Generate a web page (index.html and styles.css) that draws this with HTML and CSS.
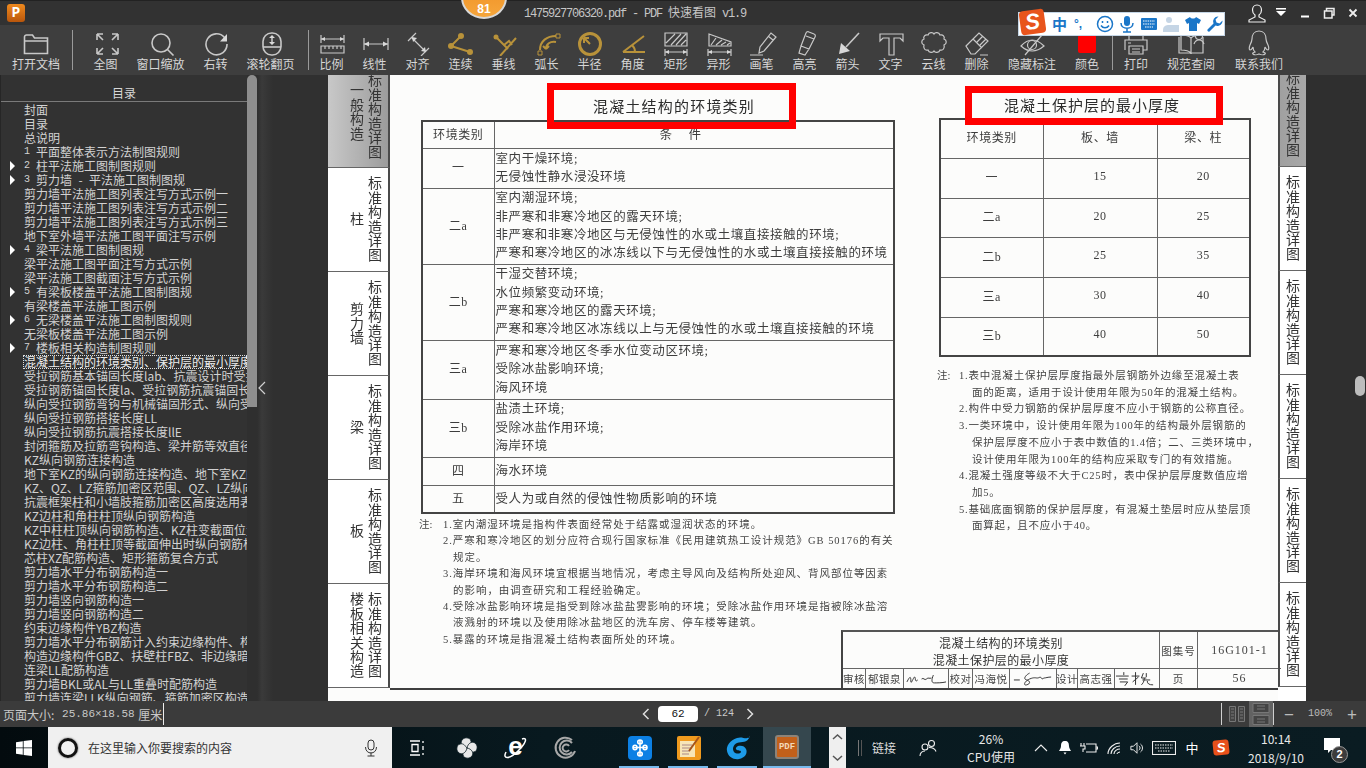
FILE: index.html
```html
<!DOCTYPE html>
<html lang="zh-CN">
<head>
<meta charset="utf-8">
<title>PDF 快速看图</title>
<link rel="stylesheet" href="styles.css">
</head>
<body>
<div class="app">
  <header class="titlebar">
    <div class="logo">P</div>
    <div class="title">1475927706320.pdf - PDF <span class="cjk">快速看图</span> v1.9</div>
    <div class="winbtns">
      <svg class="wb wb-user" viewBox="0 0 24 20"><path d="M12 2c3 0 4.500 2.500 4.500 5 0 2-1 4-2.500 5v2l6 3v2H4v-2l6-3v-2c-1.500-1-2.500-3-2.500-5 0-2.500 1.500-5 4.500-5z"/></svg>
      <svg class="wb" viewBox="0 0 24 20"><path class="solid" d="M7 5h10v1.500H7zM7 8h10l-5 5z"/></svg>
      <svg class="wb" viewBox="0 0 24 20"><path class="solid" d="M8 12.500h8v2H8z"/></svg>
      <svg class="wb wb-r" viewBox="0 0 24 20"><path d="M9.500 8V5.500h7.500V12h-2.500M7.500 8H15v7H7.500z"/></svg>
      <svg class="wb wb-x" viewBox="0 0 24 20"><path d="M8.500 6.500l7 7M15.500 6.500l-7 7"/></svg>
    </div>
  </header>

  <nav class="toolbar">
    <div class="tool w72"><svg class="ic" viewBox="0 0 30 27"><path d="M3.500 24.500V8a2 2 0 0 1 2-2h6l2 3h13v15.500zM3.500 12h23"/></svg><span>打开文档</span></div>
    <i class="sep sep-a"></i>
    <div class="tool w55"><svg class="ic" viewBox="0 0 30 27"><path d="M6 5l6 6M6 5h6M6 5v6M27 5l-6 6M27 5h-6M27 5v6M6 25l6-6M6 25h6M6 25v-6M27 25l-6-6M27 25h-6M27 25v-6"/></svg><span>全图</span></div>
    <div class="tool w55"><svg class="ic" viewBox="0 0 30 27"><circle cx="15" cy="14" r="9"/><path d="M21.500 20.500l6 6"/></svg><span>窗口缩放</span></div>
    <div class="tool w55"><svg class="ic" viewBox="0 0 30 27"><path d="M23.500 8.500A10.500 10.500 0 1 0 26 15"/><path class="fill" d="M26 5v7.500h-7z"/></svg><span>右转</span></div>
    <div class="tool w55"><svg class="ic" viewBox="0 0 30 27"><rect x="7" y="4" width="18" height="22" rx="8.500"/><path d="M7 18h18"/><path class="fill" d="M16 6l3 3h-6zM16 16l3-3h-6zM15.300 9h1.400v4h-1.400z"/></svg><span>滚轮翻页</span></div>
    <i class="sep sep-b"></i>
    <div class="tool w43"><svg class="ic thin" viewBox="0 0 30 27"><path d="M4 6v8M27 6v8M4 10h23M4 17h23v7H4zM8 17v3M12 17v3M16 17v3M20 17v3M24 17v3"/><path class="fill" d="M4 10l4-2v4zM27 10l-4-2v4z"/></svg><span>比例</span></div>
    <div class="tool w43"><svg class="ic thin" viewBox="0 0 30 27"><path d="M4 9v12M28 9v12M4 15h24"/><path class="fill" d="M4 15l5-2.500v5zM28 15l-5-2.500v5z"/></svg><span>线性</span></div>
    <div class="tool w43"><svg class="ic thin" viewBox="0 0 30 27"><path d="M5 12l8-8M18 27l8-8M9 9l14 14"/><path class="fill" d="M9 8l5 1-4 4zM23 23l-5-1 4-4z"/></svg><span>对齐</span></div>
    <div class="tool w43"><svg class="ic gold" viewBox="0 0 30 27"><path d="M15 7L5 17l19 6"/><circle class="gfill" cx="15" cy="7" r="3"/><circle class="gfill" cx="5" cy="17" r="3"/><circle class="gfill" cx="24" cy="23" r="3"/></svg><span>连续</span></div>
    <div class="tool w43"><svg class="ic gold" viewBox="0 0 30 27"><path d="M27 9L11 27M7 8l12 12M15 16l5-4 3 4"/><circle class="gfill" cx="7" cy="8" r="2.500"/></svg><span>垂线</span></div>
    <div class="tool w43"><svg class="ic gold" viewBox="0 0 30 27"><path d="M8 21C8 12 15 7 24 7M14 20c0-5 4-8 10-7M14 20l-3-3M14 20l3-3"/><path class="gthin" d="M6 22h4v4H6zM24 5h4v4h-4z"/></svg><span>弧长</span></div>
    <div class="tool w43"><svg class="ic gold" viewBox="0 0 30 27"><circle class="gthick" cx="15" cy="15" r="10.500"/><path d="M15 15L9 9M9 9h5M9 9v5"/></svg><span>半径</span></div>
    <div class="tool w43"><svg class="ic gold" viewBox="0 0 30 27"><path d="M5 23h22M5 23L26 7M14 16c2 2 3 4 3 7"/></svg><span>角度</span></div>
    <div class="tool w43"><svg class="ic thin" viewBox="0 0 30 27"><path d="M4 4h22v13H4zM5 14l9-9M10 16l10-11M15 16l10-11M20 16l5-5M4 20v7M26 20v7M4 23h22"/><path class="fill" d="M4 23l4-2v4zM26 23l-4-2v4z"/></svg><span>矩形</span></div>
    <div class="tool w43"><svg class="ic thin" viewBox="0 0 30 27"><path d="M5 5l22 8v4H5zM7 16l5-7M12 16l6-5M17 16l5-3M23 16l3-2M4 20v7M27 20v7M4 23h23"/><path class="fill" d="M4 23l4-2v4zM27 23l-4-2v4z"/></svg><span>异形</span></div>
    <div class="tool w43"><svg class="ic thin" viewBox="0 0 30 27"><path d="M3 26h13M12 24l1-6L24 4l5 4-12 14zM21 7l5 4"/></svg><span>画笔</span></div>
    <div class="tool w43"><svg class="ic thin" viewBox="0 0 30 27"><path d="M11 17l5-13a2 2 0 0 1 3-1l5 2a2 2 0 0 1 1 3l-6 12zM16 7l8 3M11 17l-2 7 6 2 4-6"/></svg><span>高亮</span></div>
    <div class="tool w43"><svg class="ic" viewBox="0 0 30 27"><path d="M26 4L13 18"/><path class="fill" d="M6 25l2-11 9 8z"/></svg><span>箭头</span></div>
    <div class="tool w43"><svg class="ic thin" viewBox="0 0 30 27"><path d="M4 5h23v7l-3-3h-6v17h-5V9H7l-3 3z"/></svg><span>文字</span></div>
    <div class="tool w43"><svg class="ic thin" viewBox="0 0 30 27"><path d="M9 6c1-3 5-3 6-1 1-2 5-2 6 1 3-1 5 2 4 4 3 1 3 5 0 6 1 3-1 6-4 5-1 3-5 3-6 1-1 2-5 2-6-1-3 1-5-2-4-5-3-1-3-5 0-6-1-2 1-5 4-4z"/></svg><span>云线</span></div>
    <div class="tool w43"><svg class="ic thin" viewBox="0 0 30 27"><path d="M4 17L17 4l9 8-13 13H9zM11 10l9 9M21 7l-6 6M24 10l-6 6M18 26h8"/></svg><span>删除</span></div>
    <div class="tool w69"><svg class="ic thin" viewBox="0 0 30 27"><path d="M4 17Q15 5 27 17 15 27 4 17z"/><circle cx="15" cy="16" r="4.500"/><path d="M8 26L25 6"/></svg><span>隐藏标注</span></div>
    <div class="tool w42"><div class="swatch"></div><span>颜色</span></div>
    <i class="sep sep-c"></i>
    <div class="tool w44"><svg class="ic thin" viewBox="0 0 30 27"><path d="M8 11V5h14v6M4 21V11h22v10h-4M8 17h14v8H8zM11 20h8M11 23h8M7 14h3"/></svg><span>打印</span></div>
    <div class="tool w64"><svg class="ic thin" viewBox="0 0 30 27"><path d="M3 8v16h11c1 0 1 1 1 1s0-1 1-1h11V8M15 9v16M15 9c-2-2-6-3-10-3v15c4 0 8 1 10 3M15 9c1-1 2-2 4-2"/><circle cx="23" cy="7" r="3.500"/><path d="M18 15c1-3 3-4 5-4s4 1 5 4"/></svg><span>规范查阅</span></div>
    <div class="tool w72 qq"><svg class="ic thin" viewBox="0 0 30 27"><path d="M15 2c5 0 7 4 7 8 0 2 1 4 2 6s1 5 0 5-2-1-3-3c0 2-1 4-2 5 2 1 3 1 2 2s-4 1-6 0c-2 1-5 1-6 0s0-1 2-2c-1-1-2-3-2-5-1 2-2 3-3 3s-1-3 0-5 2-4 2-6c0-4 2-8 7-8z"/></svg><span>联系我们</span></div>
  </nav>

  <main class="main">
    <aside class="sidebar">
      <h2 class="toc-head">目录</h2>
      <ul class="toc">
        <li>封面</li>
        <li>目录</li>
        <li>总说明</li>
        <li><b>1</b>平面整体表示方法制图规则</li>
        <li class="arrow"><b>2</b>柱平法施工图制图规则</li>
        <li class="arrow"><b>3</b>剪力墙<em>-</em>平法施工图制图规</li>
        <li>剪力墙平法施工图列表注写方式示例一</li>
        <li>剪力墙平法施工图列表注写方式示例二</li>
        <li>剪力墙平法施工图列表注写方式示例三</li>
        <li>地下室外墙平法施工图平面注写示例</li>
        <li class="arrow"><b>4</b>梁平法施工图制图规</li>
        <li>梁平法施工图平面注写方式示例</li>
        <li>梁平法施工图截面注写方式示例</li>
        <li class="arrow"><b>5</b>有梁板楼盖平法施工图制图规</li>
        <li>有梁楼盖平法施工图示例</li>
        <li class="arrow"><b>6</b>无梁楼盖平法施工图制图规则</li>
        <li>无梁板楼盖平法施工图示例</li>
        <li class="arrow"><b>7</b>楼板相关构造制图规则</li>
        <li class="selected">混凝土结构的环境类别、保护层的最小厚度</li>
        <li>受拉钢筋基本锚固长度lab、抗震设计时受拉钢筋</li>
        <li>受拉钢筋锚固长度la、受拉钢筋抗震锚固长度laE</li>
        <li>纵向受拉钢筋弯钩与机械锚固形式、纵向受力钢筋</li>
        <li>纵向受拉钢筋搭接长度LL</li>
        <li>纵向受拉钢筋抗震搭接长度llE</li>
        <li>封闭箍筋及拉筋弯钩构造、梁并筋等效直径概念</li>
        <li>KZ纵向钢筋连接构造</li>
        <li>地下室KZ的纵向钢筋连接构造、地下室KZ的箍筋</li>
        <li>KZ、QZ、LZ箍筋加密区范围、QZ、LZ纵向钢筋连接</li>
        <li>抗震框架柱和小墙肢箍筋加密区高度选用表</li>
        <li>KZ边柱和角柱柱顶纵向钢筋构造</li>
        <li>KZ中柱柱顶纵向钢筋构造、KZ柱变截面位置纵向</li>
        <li>KZ边柱、角柱柱顶等截面伸出时纵向钢筋构造</li>
        <li>芯柱XZ配筋构造、矩形箍筋复合方式</li>
        <li>剪力墙水平分布钢筋构造一</li>
        <li>剪力墙水平分布钢筋构造二</li>
        <li>剪力墙竖向钢筋构造一</li>
        <li>剪力墙竖向钢筋构造二</li>
        <li>约束边缘构件YBZ构造</li>
        <li>剪力墙水平分布钢筋计入约束边缘构件、构造</li>
        <li>构造边缘构件GBZ、扶壁柱FBZ、非边缘暗柱构造</li>
        <li>连梁LL配筋构造</li>
        <li>剪力墙BKL或AL与LL重叠时配筋构造</li>
        <li>剪力墙连梁LLK纵向钢筋、箍筋加密区构造</li>
      </ul>
    </aside>
    <div class="side-scroll"></div>
    <div class="gutter"><svg class="collapse" viewBox="0 0 8 14"><path d="M7 1L1 7l6 6"/></svg></div>

    <section class="page">
      <div class="tabs-left">
        <div class="tab tab-gray"><span class="vt vt-low">一般构造</span><span class="vt">标准构造详图</span></div>
        <div class="tab"><span class="vt">柱</span><span class="vt">标准构造详图</span></div>
        <div class="tab"><span class="vt">剪力墙</span><span class="vt">标准构造详图</span></div>
        <div class="tab"><span class="vt">梁</span><span class="vt">标准构造详图</span></div>
        <div class="tab"><span class="vt">板</span><span class="vt">标准构造详图</span></div>
        <div class="tab"><span class="vt">楼板相关构造</span><span class="vt">标准构造详图</span></div>
      </div>

      <div class="doc">
        <div class="doc-top">
          <div class="col-l">
            <h3 class="dt dt-l">混凝土结构的环境类别</h3>
            <table class="tbl tbl-l">
              <tr class="r27"><td class="k">环境类别</td><td class="hd">条　件</td></tr>
              <tr class="r40"><td class="k">一</td><td>室内干燥环境;<br>无侵蚀性静水浸没环境</td></tr>
              <tr class="r76"><td class="k">二a</td><td>室内潮湿环境;<br>非严寒和非寒冷地区的露天环境;<br>非严寒和非寒冷地区与无侵蚀性的水或土壤直接接触的环境;<br>严寒和寒冷地区的冰冻线以下与无侵蚀性的水或土壤直接接触的环境</td></tr>
              <tr class="r76"><td class="k">二b</td><td>干湿交替环境;<br>水位频繁变动环境;<br>严寒和寒冷地区的露天环境;<br>严寒和寒冷地区冰冻线以上与无侵蚀性的水或土壤直接接触的环境</td></tr>
              <tr class="r59"><td class="k">三a</td><td>严寒和寒冷地区冬季水位变动区环境;<br>受除冰盐影响环境;<br>海风环境</td></tr>
              <tr class="r58"><td class="k">三b</td><td>盐渍土环境;<br>受除冰盐作用环境;<br>海岸环境</td></tr>
              <tr class="r28"><td class="k">四</td><td>海水环境</td></tr>
              <tr class="r28"><td class="k">五</td><td>受人为或自然的侵蚀性物质影响的环境</td></tr>
            </table>
            <div class="notes notes-l">
              <div class="n n1"><span class="zhu">注:</span>1.室内潮湿环境是指构件表面经常处于结露或湿润状态的环境。</div>
              <div class="n">2.严寒和寒冷地区的划分应符合现行国家标准《民用建筑热工设计规范》GB 50176的有关</div>
              <div class="n nc">规定。</div>
              <div class="n">3.海岸环境和海风环境宜根据当地情况&#xFF0C;考虑主导风向及结构所处迎风、背风部位等因素</div>
              <div class="n nc">的影响&#xFF0C;由调查研究和工程经验确定。</div>
              <div class="n">4.受除冰盐影响环境是指受到除冰盐盐雾影响的环境&#xFF1B;受除冰盐作用环境是指被除冰盐溶</div>
              <div class="n nc">液溅射的环境以及使用除冰盐地区的洗车房、停车楼等建筑。</div>
              <div class="n">5.暴露的环境是指混凝土结构表面所处的环境。</div>
            </div>
          </div>
          <div class="col-r">
            <h3 class="dt dt-r">混凝土保护层的最小厚度</h3>
            <table class="tbl tbl-r">
              <tr class="r39"><td class="c1">环境类别</td><td class="c2">板、墙</td><td>梁、柱</td></tr>
              <tr class="r40"><td>一</td><td>15</td><td>20</td></tr>
              <tr class="r39"><td>二a</td><td>20</td><td>25</td></tr>
              <tr class="r40"><td>二b</td><td>25</td><td>35</td></tr>
              <tr class="r40"><td>三a</td><td>30</td><td>40</td></tr>
              <tr class="r39"><td>三b</td><td>40</td><td>50</td></tr>
            </table>
            <div class="notes notes-r">
              <div class="n n1"><span class="zhu">注:</span>1.表中混凝土保护层厚度指最外层钢筋外边缘至混凝土表</div>
              <div class="n nc">面的距离&#xFF0C;适用于设计使用年限为50年的混凝土结构。</div>
              <div class="n">2.构件中受力钢筋的保护层厚度不应小于钢筋的公称直径。</div>
              <div class="n">3.一类环境中&#xFF0C;设计使用年限为100年的结构最外层钢筋的</div>
              <div class="n nc">保护层厚度不应小于表中数值的1.4倍&#xFF1B;二、三类环境中&#xFF0C;</div>
              <div class="n nc">设计使用年限为100年的结构应采取专门的有效措施。</div>
              <div class="n">4.混凝土强度等级不大于C25时&#xFF0C;表中保护层厚度数值应增</div>
              <div class="n nc">加5。</div>
              <div class="n">5.基础底面钢筋的保护层厚度&#xFF0C;有混凝土垫层时应从垫层顶</div>
              <div class="n nc">面算起&#xFF0C;且不应小于40。</div>
            </div>
          </div>
        </div>
        <div class="doc-bottom">
          <div class="tb">
            <div class="tb-title">混凝土结构的环境类别<br>混凝土保护层的最小厚度</div>
            <div class="tb-c">图集号</div>
            <div class="tb-c tb-code">16G101-1</div>
            <div class="tb-s">审核</div><div class="tb-s">郁银泉</div>
            <div class="tb-s"><svg class="sig" viewBox="0 0 45 17"><path d="M3 12c3-6 4-6 4-1s3-5 4-4 0 6 3 3M18 9c2-2 3 2 5 0s3 0 5-1M30 5c-2 5-2 8 1 8s8 0 12-1"/></svg></div>
            <div class="tb-s">校对</div><div class="tb-s">冯海悦</div>
            <div class="tb-s"><svg class="sig" viewBox="0 0 47 17"><path d="M4 10h6M20 3c-4 2-7 6-3 7s4 4 0 5-2-4 3-6 6-1 8-1 3-2 4 0 2 0 3 0 4-1 7-1"/></svg></div>
            <div class="tb-s">设计</div><div class="tb-s">高志强</div>
            <div class="tb-s"><svg class="sig" viewBox="0 0 45 17"><path d="M1 6h13M9 2v3M4 9h9M5 12h8l-3 4M17 6h8M21 2v13M18 12l6-5M29 3l-2 5h5M32 3v4M28 10h8M30 8c0 4-2 6-3 7M33 11c0 3 2 4 6 4"/></svg></div>
            <div class="tb-c">页</div>
            <div class="tb-c tb-code">56</div>
          </div>
        </div>
        <div class="redbox redbox-l"></div>
        <div class="redbox redbox-r"></div>
      </div>

      <div class="tabs-right">
        <div class="rtab rtab-gray"><span class="vt">标准构造详图</span></div>
        <div class="rtab"><span class="vt">标准构造详图</span></div>
        <div class="rtab"><span class="vt">标准构造详图</span></div>
        <div class="rtab"><span class="vt">标准构造详图</span></div>
        <div class="rtab"><span class="vt">标准构造详图</span></div>
        <div class="rtab"><span class="vt">标准构造详图</span></div>
      </div>
    </section>
    <div class="right-dark"></div>
  </main>

  <footer class="status">
    <div class="st-left">页面大小: <span class="mono">25.86×18.58</span> 厘米<i class="caret"></i></div>
    <div class="st-nav">
      <svg class="chev" viewBox="0 0 8 12"><path d="M6.500 1l-5 5 5 5"/></svg>
      <div class="pageno">62</div>
      <span class="mono total">/ 124</span>
      <svg class="chev" viewBox="0 0 8 12"><path d="M1.500 1l5 5-5 5"/></svg>
    </div>
    <div class="st-right">
      <i class="vsep"></i>
      <svg class="view v1" viewBox="0 0 16 16"><path d="M.5 .5h6v15h-6zM9.500 .5h6v15h-6zM2 3h3M2 6h3M2 9h3M2 12h3M11 3h3M11 6h3M11 9h3M11 12h3"/></svg>
      <div class="view-on"><svg class="view v2" viewBox="0 0 18 22"><path d="M1 .5h16v9H1zM1 12.500h16v9H1zM5 3h8M5 6h8M5 16h8M5 19h8"/></svg></div>
      <i class="vsep"></i>
      <span class="zm-btn">−</span>
      <span class="zm-val mono">100%</span>
      <span class="zm-btn">+</span>
    </div>
  </footer>

  <div class="taskbar">
    <div class="start"><svg viewBox="0 0 16 16"><path d="M0 2.200L6.800 1.300V7.500H0zM7.600 1.100L16 0V7.500H7.600zM0 8.300H6.800V14.700L0 13.800zM7.600 8.300H16V16L7.600 14.900z"/></svg></div>
    <div class="search">
      <i class="cortana"></i>
      <span class="s-text">在这里输入你要搜索的内容</span>
      <svg class="s-mic" viewBox="0 0 14 18"><rect x="4" y="1" width="6" height="10" rx="3"/><path d="M1.500 8c0 8 11 8 11 0M7 13.500V17M3.500 17h7"/></svg>
    </div>
    <div class="tv"><svg viewBox="0 0 16 16"><path d="M1 1h10M1 15h10M3 4.500h6v7H3zM14 1v2M14 6v4M14 13v2"/></svg></div>
    <div class="pin"><svg viewBox="0 0 26 26"><g class="pw"><path d="M13 13C8 12 6 8 8 5s8-3 9 1-2 5-4 7z"/><path d="M13 13c1-5 5-7 8-5s3 8-1 9-5-2-7-4z"/><path d="M13 13c5 1 7 5 5 8s-8 3-9-1 2-5 4-7z"/><path d="M13 13c-1 5-5 7-8 5s-3-8 1-9 5 2 7 4z"/></g></svg></div>
    <div class="pin ie"><span class="ie-e">e</span><svg class="ie-ring" viewBox="0 0 26 26"><path d="M4 17C0 25 8 24 16 16S26 2 20 4"/></svg></div>
    <div class="pin"><svg class="swirl" viewBox="0 0 26 26"><path d="M20 5A10 10 0 1 0 23 16M20 8a7 7 0 1 0 0 9M17 11a3.500 3.500 0 1 0 0 4"/></svg></div>
    <div class="tile t1"><svg viewBox="0 0 24 24"><rect width="24" height="24" rx="4" fill="#0c80e4"/><path class="w" d="M12 4v16M5 11.500h14M12 4c-3 0-3 4 0 4s3-4 0-4zM5 11.500c0 3 4 3 4 0s-4-3-4 0zM19 11.500c0 3-4 3-4 0s4-3 4 0zM12 20c-3 0-3-4 0-4s3 4 0 4z"/></svg></div>
    <div class="tile t2"><svg viewBox="0 0 24 24"><rect width="24" height="24" rx="2" fill="#f09a1e"/><rect x="3" y="5" width="15" height="16" fill="#f7e6b8"/><path class="n2" d="M5 9h10M5 12h10M5 15h8M5 18h7"/><path class="n3" d="M22 1L12 15"/></svg></div>
    <div class="tile t3"><svg viewBox="0 0 24 24"><path fill="#1d9ae8" d="M24 1c-4 3-8-1-13 1C4 4 0 10 1 15c1 6 7 9 12 8 6-1 9-6 7-10-1-3-5-4-8-3-2 1-3 3-1 4 2 1 4 0 4 2-1 2-5 2-7 0-2-3-1-7 3-9 5-2 10 1 13-7z"/></svg></div>
    <div class="active-tile"><div class="pdfico">PDF</div></div>
    <div class="chip"><svg viewBox="0 0 17 40"><path d="M4 12l4.500-4 4.500 4M4 29l4.500 4 4.500-4"/></svg></div>
    <i class="grip"></i>
    <span class="tlink">链接</span>
    <div class="tray t-people"><svg viewBox="0 0 18 18"><circle cx="6" cy="8" r="3"/><circle cx="12.500" cy="4.500" r="3"/><path d="M1 17c0-3 2-5 5-5M10 8.500c3 0 6 1 7 4"/></svg></div>
    <div class="cpu"><span>26%</span><span>CPU使用</span></div>
    <div class="tray w24c t-first"><svg viewBox="0 0 14 14"><path d="M1 10l6-6 6 6"/></svg></div>
    <div class="tray w24c"><svg viewBox="0 0 14 14"><path class="wf" d="M7 0c3 0 4 2 4 5 0 2 1 3 2 5H1c1-2 2-3 2-5 0-3 1-5 4-5zM5.500 11.500h3l-1.500 2z"/></svg></div>
    <div class="tray w24c"><svg class="bat" viewBox="0 0 18 14"><path d="M6 3h10v8H6M16 6h1.500v2H16M1 2v3M4 2v3M0 5h5v3H3v3"/></svg></div>
    <div class="tray w25c"><svg viewBox="0 0 14 14"><path d="M1 13C1 7 7 2 13 2M4 13c0-4 4-8 9-8M7 13c0-3 3-5 6-5M10 13c0-1 2-2 3-2"/></svg></div>
    <div class="tray w21c"><svg viewBox="0 0 16 14"><path d="M1 5h3l4-4v12l-4-4H1zM10 4.500c2 1 2 4 0 5M12 2.500c3 2 3 7 0 9"/></svg></div>
    <div class="tray w34c"><svg class="kb" viewBox="0 0 24 14"><rect x=".5" y=".5" width="23" height="13"/><path d="M3 4h18M3 7h18M6 10h12" stroke-dasharray="1.500 1"/></svg></div>
    <span class="t-zh">中</span>
    <div class="t-s">S</div>
    <div class="clock"><span>10:14</span><span>2018/9/10</span></div>
    <div class="notif"><svg viewBox="0 0 16 15"><path class="wf" d="M0 0h16v12H7l-3 3v-3H0z"/></svg><span class="nbadge">2</span></div>
  </div>
</div>

<div class="badge81">81</div>
<div class="ime">
  <div class="ime-s">S</div>
  <span class="ime-zh">中</span>
  <span class="ime-dot">°,</span>
  <svg class="ime-i" viewBox="0 0 18 18"><circle cx="9" cy="9" r="7.500"/><path d="M5 10.500c2 3 6 3 8 0M6.500 6v2M11.500 6v2"/></svg>
  <svg class="ime-i" viewBox="0 0 18 18"><rect class="bf" x="6" y="1" width="6" height="10" rx="3"/><path d="M3 8c0 7 12 7 12 0M9 13v4M5 17h8"/></svg>
  <svg class="ime-i ime-kb" viewBox="0 0 18 18"><rect class="bf" x="1" y="3" width="16" height="12" rx="1"/><path class="kw" d="M3 6h12M3 9h12M5 12h8" stroke-dasharray="1.500 .8"/></svg>
  <svg class="ime-i" viewBox="0 0 18 18"><circle class="pale" cx="7" cy="5" r="3"/><path class="pale" d="M1 15c0-4 3-5 6-5h10v7H1z"/></svg>
  <svg class="ime-i" viewBox="0 0 18 18"><path class="bf" d="M6 2L1 5l2 4 2-1v8h8V8l2 1 2-4-5-3c-1 2-5 2-6 0z"/></svg>
  <svg class="ime-i" viewBox="0 0 18 18"><path class="bf" d="M12 1.500a5 5 0 0 0-4.500 7l-6 6a1.500 1.500 0 0 0 2 2l6-6a5 5 0 0 0 7-5l-3 3-3-1-1-3 3-3c-.3 0-.3-.1-.5-.1z"/></svg>
</div>
<div class="vthumb"></div>
</body>
</html>
```

FILE: styles.css
```css
* { box-sizing: border-box; }
html, body { margin: 0; padding: 0; width: 1366px; height: 768px; overflow: hidden; }
body { position: relative; font-family: "Noto Sans CJK SC", "Noto Sans", sans-serif; font-size: 12px; color: #d4d4d4; background: #2f2f2f; }
.app { display: flex; flex-direction: column; width: 1366px; height: 768px; }

/* title bar */
.titlebar { height: 25px; flex: none; display: flex; align-items: center; background: #323232; border-top: 1px solid #222; }
.logo { width: 18px; height: 18px; margin-left: 7px; border-radius: 3px; background: linear-gradient(#f08a1e, #b9560c); color: #fff; font: bold 14px/18px "Liberation Mono", monospace; text-align: center; }
.title { margin-left: 499px; font: 12px/16px "Liberation Mono", "Noto Sans CJK SC", monospace; letter-spacing: -1.2px; color: #c6c6c6; white-space: pre; }
.title .cjk { font-family: "Noto Sans CJK SC", sans-serif; letter-spacing: 0; }
.winbtns { margin-left: auto; margin-right: 1px; display: flex; align-items: center; gap: 0; }
.wb { width: 24px; height: 20px; fill: none; stroke: #eee; stroke-width: 1.200; }
.wb .solid { fill: #fff; stroke: none; }
.wb-r { stroke-width: 1.500; }
.wb-x { stroke-width: 1.800; }

/* toolbar */
.toolbar { height: 50px; flex: none; display: flex; background: #3e3e3e; }
.tool { flex: none; display: flex; flex-direction: column; align-items: center; padding-top: 4px; }
.tool span { font-size: 12px; line-height: 16px; color: #d6d6d6; white-space: nowrap; }
.ic { width: 30px; height: 27px; fill: none; stroke: #c8c8c8; stroke-width: 1.600; }
.ic.thin { stroke-width: 1.200; }
.ic .fill { fill: #d8d8d8; stroke: none; }
.ic.gold { stroke: #b8923a; stroke-width: 2; }
.ic .gfill { fill: #b8923a; stroke: none; }
.ic .gthin { stroke-width: 1; }
.ic .gthick { stroke-width: 3; }
.w72 { width: 72px; }
.w55 { width: 55px; }
.w43 { width: 43px; }
.w69 { width: 68px; }
.w42 { width: 42px; }
.w44 { width: 44px; }
.w64 { width: 64px; margin-left: 1px; }
.qq { margin-left: 0; }
.sep { flex: none; width: 1px; height: 40px; margin-top: 5px; background: #9a9a9a; }
.sep-a { margin-right: 5px; }
.sep-b { margin-left: 10px; margin-right: 1px; }
.sep-c { margin-left: 4px; margin-right: 1px; }
.swatch { width: 18px; height: 18px; margin: 6px 0 3px; border-radius: 2px; background: #f00; }

/* main */
.main { flex: 1; min-height: 0; display: flex; }
.sidebar { width: 247px; flex: none; background: #323232; border-left: 1px solid #262626; overflow: hidden; }
.toc-head { margin: 0; height: 27px; font-size: 12px; font-weight: 400; line-height: 36px; text-align: center; color: #d8d8d8; border-bottom: 1px solid #7a7a7a; }
.toc { margin: 0; padding: 1px 0 0; list-style: none; }
.toc li { display: flex; align-items: center; height: 14px; line-height: 14px; padding-left: 23px; white-space: nowrap; color: #d2d2d2; overflow: hidden; }
.toc li b { flex: none; width: 12px; font: 10px/14px "Liberation Mono", monospace; }
.toc li em { flex: none; width: 17px; font-style: normal; text-align: center; }
.toc li.arrow { padding-left: 9px; }
.toc li.arrow::before { content: ""; flex: none; width: 0; height: 0; margin-right: 9px; border-left: 5px solid #fff; border-top: 5px solid transparent; border-bottom: 5px solid transparent; }
.toc li.selected { margin-left: 22px; padding-left: 1px; outline: 1px dotted #ddd; outline-offset: -1px; color: #eee; }
.side-scroll { width: 10px; flex: none; height: 332px; border-radius: 5px 5px 0 0; background: #8e8e8e; }
.gutter { width: 71px; flex: none; display: flex; align-items: center; background: linear-gradient(90deg, #2e2e2e, #3a3a3a 5px, #303030 16px); }
.collapse { width: 8px; height: 14px; margin-left: 1px; fill: none; stroke: #d0d0d0; stroke-width: 1.200; }
.page { width: 978px; flex: none; display: flex; background: #fcfcfb; color: #3d3d3d; overflow: hidden; }
.right-dark { flex: 1; background: #2f2f2f; }

/* document tabs */
.tabs-left { width: 62px; flex: none; display: flex; flex-direction: column; }
.tab { height: 104px; flex: none; display: flex; align-items: center; padding-left: 22px; gap: 4px; background: #fff; border-right: 2px solid #4a4a4a; border-bottom: 1px solid #666; overflow: hidden; filter: blur(.25px); }
.tab-gray { height: 93px; align-items: flex-end; padding-bottom: 8px; background: linear-gradient(90deg, #c8c8c8, #9c9c9c); }
.vt { writing-mode: vertical-rl; text-orientation: upright; width: 14px; font-size: 14px; line-height: 14px; letter-spacing: .4px; color: #333; white-space: nowrap; }
.vt-low { margin-bottom: 18px; }
.tabs-right { width: 28px; flex: none; display: flex; flex-direction: column; background: #fff; }
.rtab { height: 104px; flex: none; display: flex; align-items: center; justify-content: center; border-left: 2px solid #4a4a4a; border-bottom: 1px solid #666; overflow: hidden; filter: blur(.25px); }
.rtab-gray { height: 92px; align-items: flex-end; padding-bottom: 9px; background: linear-gradient(90deg, #a0a0a0, #a8a8a8); }

/* document */
.doc { width: 888px; flex: none; position: relative; display: flex; flex-direction: column; padding-bottom: 13px; font-family: "Liberation Serif", "Noto Sans CJK SC", serif; }
.doc-top { height: 555px; flex: none; display: flex; padding-left: 31px; filter: blur(.3px); }
.col-l { width: 474px; flex: none; margin-right: 44px; }
.col-r { width: 312px; flex: none; }
.dt { margin: 0; font-family: "Noto Sans CJK SC", sans-serif; font-weight: 400; font-size: 15px; letter-spacing: 1.200px; text-align: center; white-space: nowrap; color: #2c2c2c; }
.dt-l { height: 45px; line-height: 62px; padding-left: 32px; }
.dt-r { height: 43px; line-height: 60px; padding-right: 6px; font-size: 15px; letter-spacing: 1px; }
.tbl { border-collapse: collapse; table-layout: fixed; width: 100%; border: 2px solid #444; }
.tbl td { border: 1px solid #666; padding: 0; vertical-align: middle; }
.tbl-l { font-size: 12.500px; line-height: 18.400px; letter-spacing: .57px; }
.tbl-l td { padding-left: 1px; white-space: nowrap; }
.tbl-l td.k { width: 72px; padding: 0; text-align: center; font-size: 12px; }
.tbl-l td.hd { text-align: center; letter-spacing: 2px; padding-right: 26px; }
.tbl-r { font-size: 12px; letter-spacing: .6px; text-align: center; }
.tbl-r td { padding-bottom: 3px; }
.tbl-r .c1 { width: 103px; }
.tbl-r .c2 { width: 114px; }
.r27 { height: 27px; }
.r28 { height: 28px; }
.r39 { height: 39px; }
.r40 { height: 40px; }
.r58 { height: 58px; }
.r59 { height: 59px; }
.r76 { height: 76px; }
.notes { white-space: nowrap; color: #444; }
.notes-l { margin-top: 3px; font-size: 10.500px; line-height: 16.400px; letter-spacing: .96px; padding-left: 22px; }
.notes-l .n1 { text-indent: -24px; }
.notes-l .zhu { display: inline-block; width: 24px; text-indent: 0; letter-spacing: 0; }
.notes-l .nc { padding-left: 10px; }
.notes-r { margin-top: 11px; font-size: 10.500px; line-height: 16.700px; letter-spacing: .8px; padding-left: 20px; }
.notes-r .n1 { text-indent: -22px; }
.notes-r .zhu { display: inline-block; width: 22px; text-indent: 0; letter-spacing: 0; }
.notes-r .nc { padding-left: 13px; }

/* title block */
.doc-bottom { margin-top: auto; display: flex; justify-content: flex-end; border-bottom: 2px solid #3f3f3f; filter: blur(.3px); }
.tb { width: 438px; margin-right: -1px; display: grid; grid-template-columns: 23px 38px 45px 24px 37px 47px 21px 37px 45px 38px 83px; grid-template-rows: 37px 19px; border-top: 2px solid #555; border-left: 2px solid #444; font-size: 10.500px; color: #444; }
.tb-title { grid-column: 1 / 10; border-right: 1px solid #666; border-bottom: 1px solid #666; font-family: "Noto Sans CJK SC", sans-serif; font-size: 12px; line-height: 17px; letter-spacing: .4px; text-align: center; padding-top: 2px; color: #333; }
.tb-c { display: flex; align-items: center; justify-content: center; border-right: 1px solid #666; letter-spacing: 1px; }
.tb-c.tb-code { font-size: 12px; border-right: 0; }
.tb-s { display: flex; align-items: center; justify-content: center; border-right: 1px solid #666; white-space: nowrap; letter-spacing: .5px; overflow: hidden; }
.tb > .tb-c:nth-child(2), .tb > .tb-c:nth-child(3) { border-bottom: 1px solid #666; }
.sig { width: 100%; height: 17px; fill: none; stroke: #333; stroke-width: 1; }
.redbox { position: absolute; border: 7px solid #f00; }
.redbox-l { left: 157px; top: 8px; width: 249px; height: 46px; }
.redbox-r { left: 575px; top: 11px; width: 258px; height: 39px; }

/* status bar */
.status { height: 26px; flex: none; display: flex; align-items: center; background: #3b3b3b; color: #c9c9c9; }
.mono { font: 10px/16px "Liberation Mono", monospace; letter-spacing: 0; }
.st-left { width: 640px; flex: none; padding-left: 3px; display: flex; align-items: center; white-space: pre; }
.st-left .mono { font-size: 11px; margin: 0 1px 0 5px; }
.caret { width: 1px; height: 22px; margin-left: 1px; background: #eee; }
.st-nav { width: 581px; flex: none; display: flex; align-items: center; }
.chev { width: 8px; height: 12px; fill: none; stroke: #ddd; stroke-width: 1.500; margin-left: 2px; }
.pageno { width: 40px; height: 16px; margin: 0 6px 0 8px; border-radius: 4px; background: #fff; color: #111; font: 11px/16px "Liberation Mono", monospace; text-align: center; }
.total { font-size: 10px; margin-right: 10px; }
.st-right { flex: 1; display: flex; align-items: center; height: 100%; }
.vsep { width: 1px; height: 22px; background: #cfcfcf; }
.view { fill: #444; stroke: #777; stroke-width: 1; }
.v1 { width: 16px; height: 16px; margin: 0 4px 0 7px; }
.view-on { width: 24px; height: 26px; display: flex; align-items: center; justify-content: center; background: #626262; }
.v2 { width: 18px; height: 22px; }
.zm-btn { width: 30px; font-size: 17px; line-height: 20px; text-align: center; color: #bbb; }
.st-right .zm-btn:last-child { width: 32px; }
.zm-val { width: 32px; text-align: center; color: #bbb; }

/* taskbar */
.taskbar { height: 41px; flex: none; display: flex; align-items: center; background: linear-gradient(90deg, #030b0e, #08191f 40%, #0a1c22); color: #e8e8e8; }
.start { width: 48px; height: 100%; flex: none; display: flex; align-items: center; justify-content: center; }
.start svg { width: 16px; height: 16px; fill: #fff; }
.search { width: 344px; height: 100%; flex: none; display: flex; align-items: center; background: #f0f0f0; color: #222; padding-left: 10px; }
.cortana { width: 20px; height: 20px; flex: none; border-radius: 50%; border: 3px solid #111; box-shadow: 0 0 2px #555; }
.s-text { margin-left: 10px; font-size: 12px; color: #333; white-space: nowrap; }
.s-mic { width: 14px; height: 18px; margin-left: auto; margin-right: 14px; fill: none; stroke: #333; stroke-width: 1; }
.tv { width: 50px; flex: none; display: flex; justify-content: center; }
.tv svg { width: 16px; height: 16px; fill: none; stroke: #fff; stroke-width: 1.300; }
.pin { width: 49px; height: 100%; flex: none; display: flex; align-items: center; justify-content: center; position: relative; }
.pin svg { width: 26px; height: 26px; }
.pw path { fill: #e8e8e8; stroke: #08191f; stroke-width: .8; }
.ie-e { font: bold 26px/26px "Liberation Sans", sans-serif; color: #fff; margin-top: -4px; }
.ie-ring { position: absolute; left: 11px; top: 8px; fill: none; stroke: #fff; stroke-width: 1.500; }
.swirl { fill: none; stroke: #a8a8a8; stroke-width: 2; }
.tile { width: 49px; height: 100%; flex: none; display: flex; align-items: center; justify-content: center; position: relative; }
.tile::after { content: ""; position: absolute; left: 4px; right: 5px; bottom: 0; height: 2px; background: #76b9ed; }
.t1 { margin-left: 26px; }
.tile svg { width: 24px; height: 24px; }
.w { fill: none; stroke: #fff; stroke-width: 1.600; }
.n2 { fill: none; stroke: #a88; stroke-width: 1; }
.n3 { fill: none; stroke: #a5541a; stroke-width: 2; }
.active-tile { width: 48px; height: 100%; flex: none; margin-left: 1px; display: flex; align-items: center; justify-content: center; background: #35474e; border-bottom: 2px solid #76b9ed; }
.pdfico { width: 24px; height: 24px; border-radius: 3px; border: 2px solid #8d8378; background: #c2601a; color: #f2d9b8; font: bold 9px/20px "Liberation Mono", monospace; text-align: center; }
.chip { width: 17px; height: 100%; flex: none; margin-left: 18px; background: #efefef; }
.chip svg { width: 17px; height: 40px; fill: none; stroke: #555; stroke-width: 1.500; }
.grip { width: 4px; height: 16px; flex: none; margin-left: 12px; border-left: 1px solid #777; border-right: 1px solid #555; }
.tlink { width: 24px; flex: none; margin-left: 10px; white-space: nowrap; color: #ddd; }
.tray { flex: none; display: flex; align-items: center; justify-content: center; }
.tray svg { width: 14px; height: 14px; fill: none; stroke: #eee; stroke-width: 1.100; }
.t-people { width: 64px; }
.t-people svg { width: 18px; height: 18px; }
.cpu { width: 62px; flex: none; display: flex; flex-direction: column; align-items: center; font-size: 12px; line-height: 18px; white-space: nowrap; }
.t-first { margin-left: 7px; }
.w24c { width: 24px; }
.w25c { width: 25px; }
.w21c { width: 21px; }
.w34c { width: 34px; }
.tray .wf { fill: #fff; stroke: none; }
.tray .bat { width: 18px; }
.tray svg.kb { width: 24px; height: 14px; }
.t-zh { width: 22px; flex: none; text-align: center; font-size: 13px; color: #fff; }
.t-s { width: 16px; height: 15px; flex: none; margin: 0 6px 0 10px; border-radius: 3px; background: #e8501a; color: #fff; font: italic bold 13px/15px "Liberation Sans", sans-serif; text-align: center; transform: rotate(-6deg); }
.clock { width: 82px; flex: none; display: flex; flex-direction: column; align-items: center; font-size: 12px; line-height: 19px; white-space: nowrap; }
.notif { flex: 1; position: relative; height: 100%; display: flex; align-items: center; padding-left: 7px; }
.notif svg { width: 16px; height: 15px; margin-top: -4px; }
.wf { fill: #fff; }
.nbadge { position: absolute; left: 14px; top: 19px; width: 17px; height: 17px; border-radius: 50%; background: #3c3c3c; border: 1px solid #999; color: #fff; font: bold 11px/15px "Liberation Sans", sans-serif; text-align: center; }

/* overlays */
.badge81 { position: absolute; left: 461px; top: -24px; width: 46px; height: 43px; border-radius: 50%; background: linear-gradient(#ee8d20, #f6a63c); border: 2px solid #d8d8d8; color: #fff; font: bold 12px/14px "Liberation Sans", sans-serif; text-align: center; padding-top: 24px; }
.ime { position: absolute; left: 1018px; top: 12px; width: 207px; height: 24px; display: flex; align-items: center; background: #fff; border: 1px solid #c5d6e6; color: #1a76c8; }
.ime-s { position: absolute; left: 1px; top: -3px; width: 25px; height: 24px; border-radius: 4px; background: #e8541c; color: #fff; font: italic bold 22px/24px "Liberation Sans", sans-serif; text-align: center; transform: rotate(-8deg); }
.ime-zh { margin-left: 33px; font-size: 15px; font-weight: 700; line-height: 20px; }
.ime-dot { width: 21px; margin-left: 7px; font: bold 12px/20px "Liberation Sans", sans-serif; color: #1a76c8; }
.ime-i { width: 18px; height: 18px; margin-left: 4px; flex: none; fill: none; stroke: #1a76c8; stroke-width: 1.500; }
.ime-i .bf { fill: #1a76c8; stroke: none; }
.ime-i .kw { stroke: #fff; stroke-width: 1.200; }
.ime-i .pale { fill: #c5d5e5; stroke: none; }
.vthumb { position: absolute; left: 1355px; top: 376px; width: 10px; height: 20px; border-radius: 5px; background: #bdbdbd; }
```
